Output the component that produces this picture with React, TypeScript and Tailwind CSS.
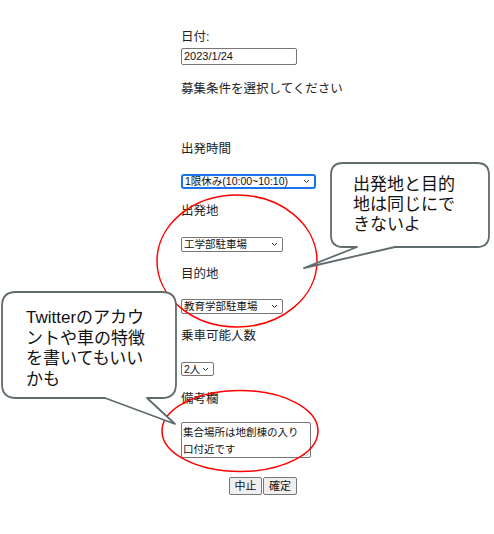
import React from "react";

const Chevron = () => (
  <svg width="7" height="5" viewBox="0 0 7 5" className="shrink-0">
    <polyline points="1,1 3.5,3.5 6,1" fill="none" stroke="#333" strokeWidth="1" />
  </svg>
);

function Select({ text, sizeClass, focused }: { text: string; sizeClass: string; focused?: boolean }) {
  return (
    <div
      className={
        "flex items-center justify-between bg-white pl-[2px] pr-[4px] text-[10.5px] leading-none text-[#111] " +
        sizeClass +
        (focused ? " border-2 border-[#1a73e8] rounded-[3px]" : " border border-[#767676] rounded-[2px]")
      }
    >
      <span className="whitespace-nowrap">{text}</span>
      <Chevron />
    </div>
  );
}

function Label({ children, className }: { children: React.ReactNode; className: string }) {
  return <p className={"text-[12.5px] leading-[15px] text-[#222] whitespace-nowrap " + className}>{children}</p>;
}

export default function App() {
  return (
    <div className="relative w-[494px] h-[534px] bg-white overflow-hidden font-['Liberation_Sans','Noto_Sans_CJK_JP',sans-serif]">
      <div className="flex flex-col items-start pl-[181px] pt-[30px] w-[345px]">
        <Label className="">日付:</Label>
        <div className="mt-[3px] w-[116px] h-[17px] border border-[#767676] rounded-[2px] flex items-center pl-[2px] text-[11px] text-[#111]">
          2023/1/24
        </div>
        <Label className="mt-[17px]">募集条件を選択してください</Label>
        <Label className="mt-[45px]">出発時間</Label>
        <div className="mt-[17px]">
          <Select text="1限休み(10:00~10:10)" sizeClass="w-[135px] h-[15px]" focused />
        </div>
        <Label className="mt-[15px]">出発地</Label>
        <div className="mt-[18px]">
          <Select text="工学部駐車場" sizeClass="w-[102px] h-[15px]" />
        </div>
        <Label className="mt-[15px]">目的地</Label>
        <div className="mt-[17px]">
          <Select text="教育学部駐車場" sizeClass="w-[102px] h-[15px]" />
        </div>
        <Label className="mt-[15px]">乗車可能人数</Label>
        <div className="mt-[18px]">
          <Select text="2人" sizeClass="w-[33px] h-[14px]" />
        </div>
        <Label className="mt-[16px]">備考欄</Label>
        <div className="relative mt-[15px] w-[130px] h-[36px] border border-[#767676] rounded-[2px] px-[1px] pt-[1px] text-[10.5px] leading-[17px] text-[#111]">
          集合場所は地創棟の入り
          <br />
          口付近です
          <svg width="6" height="6" viewBox="0 0 6 6" className="absolute right-[1px] bottom-[1px]">
            <line x1="0" y1="6" x2="6" y2="0" stroke="#999" strokeWidth="0.8" />
            <line x1="3" y1="6" x2="6" y2="3" stroke="#999" strokeWidth="0.8" />
          </svg>
        </div>
        <div className="mt-[19px] w-[164px] flex justify-center gap-[1px]">
          <button className="h-[18px] w-[33px] bg-[#efefef] border border-[#767676] rounded-[2px] text-[11px] leading-none text-[#111]">
            中止
          </button>
          <button className="h-[18px] w-[34px] bg-[#efefef] border border-[#767676] rounded-[2px] text-[11px] leading-none text-[#111]">
            確定
          </button>
        </div>
      </div>

      <svg className="absolute inset-0 pointer-events-none" width="494" height="534" viewBox="0 0 494 534">
        <ellipse cx="237" cy="261" rx="80" ry="66" fill="none" stroke="#ff0000" strokeWidth="1.5" />
        <ellipse cx="240" cy="431" rx="78" ry="40.5" fill="none" stroke="#ff0000" strokeWidth="1.5" />
        <path
          d="M 343 163 H 477 Q 489 163 489 175 V 235 Q 489 247 477 247 H 395 L 304 268 L 357 247 H 343 Q 331 247 331 235 V 175 Q 331 163 343 163 Z"
          fill="#ffffff"
          stroke="#5f6b6d"
          strokeWidth="1.8"
          strokeLinejoin="round"
        />
        <path
          d="M 16 292 H 162 Q 176 292 176 306 V 384 Q 176 398 162 398 H 147 L 175 424 L 105 398 H 16 Q 2 398 2 384 V 306 Q 2 292 16 292 Z"
          fill="#ffffff"
          stroke="#5f6b6d"
          strokeWidth="1.8"
          strokeLinejoin="round"
        />
      </svg>

      <div className="absolute left-[353px] top-[175px] text-[17px] leading-[20px] text-[#111] whitespace-nowrap">
        出発地と目的
        <br />
        地は同じにで
        <br />
        きないよ
      </div>
      <div className="absolute left-[26px] top-[308px] text-[17px] leading-[20.7px] text-[#111] whitespace-nowrap">
        Twitterのアカウ
        <br />
        ントや車の特徴
        <br />
        を書いてもいい
        <br />
        かも
      </div>
    </div>
  );
}
